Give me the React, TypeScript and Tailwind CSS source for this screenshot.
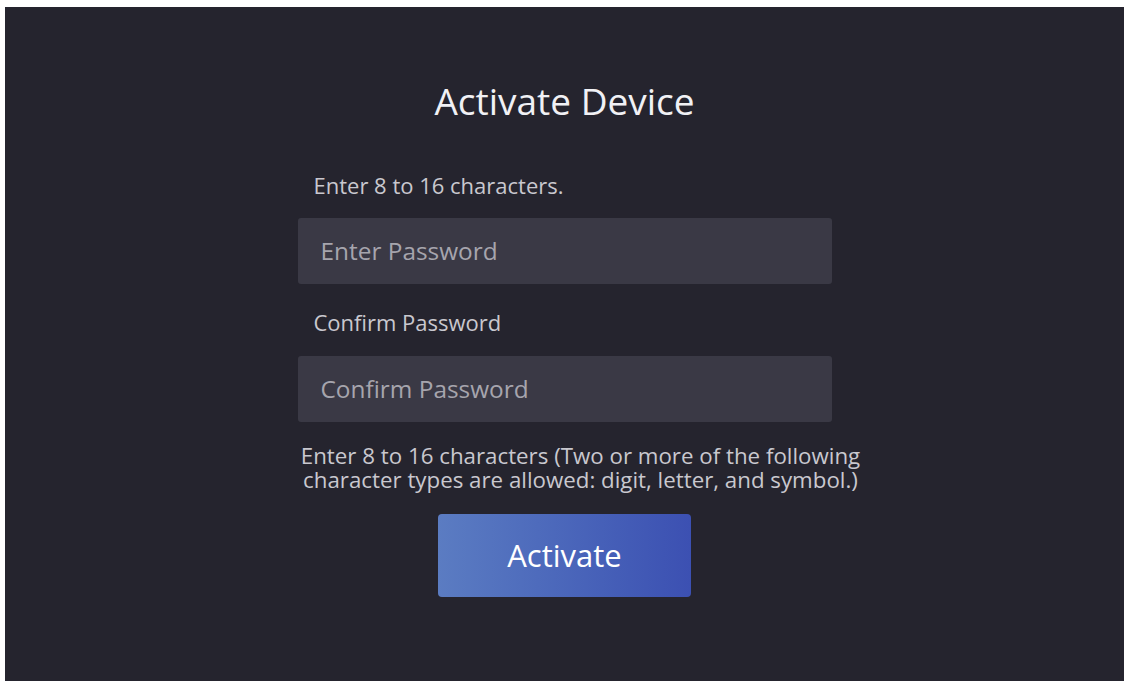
import React from "react"

const font = { fontFamily: '"Open Sans", "Noto Sans", sans-serif' }

function Field({ placeholder }: { placeholder: string }) {
  return (
    <div className="flex h-[66px] w-[534px] items-center rounded-[3px] bg-[#3a3945] pl-[23px]">
      <span className="text-[24.4px] text-[#a6a5ad]">{placeholder}</span>
    </div>
  )
}

export default function App() {
  return (
    <div className="h-[684px] w-[1126px] bg-white pl-[5px] pr-[2px] pt-[7px] pb-[3px]" style={font}>
      <div className="flex h-full w-full flex-col items-center bg-[#25242e]">
        <h1 className="mt-[69px] text-[37px] leading-[50px] font-normal text-[#f1f1f5]">Activate Device</h1>

        <div className="mt-[45px] flex w-[534px] flex-col">
          <label className="pl-[16px] text-[22px] leading-[28px] text-[#c9c8cf]">Enter 8 to 16 characters.</label>
          <div className="mt-[19px]">
            <Field placeholder="Enter Password" />
          </div>

          <label className="mt-[24px] pl-[16px] text-[22px] leading-[28px] text-[#c9c8cf]">Confirm Password</label>
          <div className="mt-[20px]">
            <Field placeholder="Confirm Password" />
          </div>

          <p className="ml-[2px] mt-[22px] w-[562px] text-center text-[22.3px] leading-[24px] text-[#c9c8cf]">
            Enter 8 to 16 characters (Two or more of the following character types are allowed: digit, letter, and symbol.)
          </p>
        </div>

        <button className="mt-[22px] flex h-[83px] w-[253px] items-center justify-center rounded-[4px] bg-gradient-to-r from-[#5b7cc2] to-[#3c50b2] text-[31px] text-white">
          Activate
        </button>
      </div>
    </div>
  )
}
